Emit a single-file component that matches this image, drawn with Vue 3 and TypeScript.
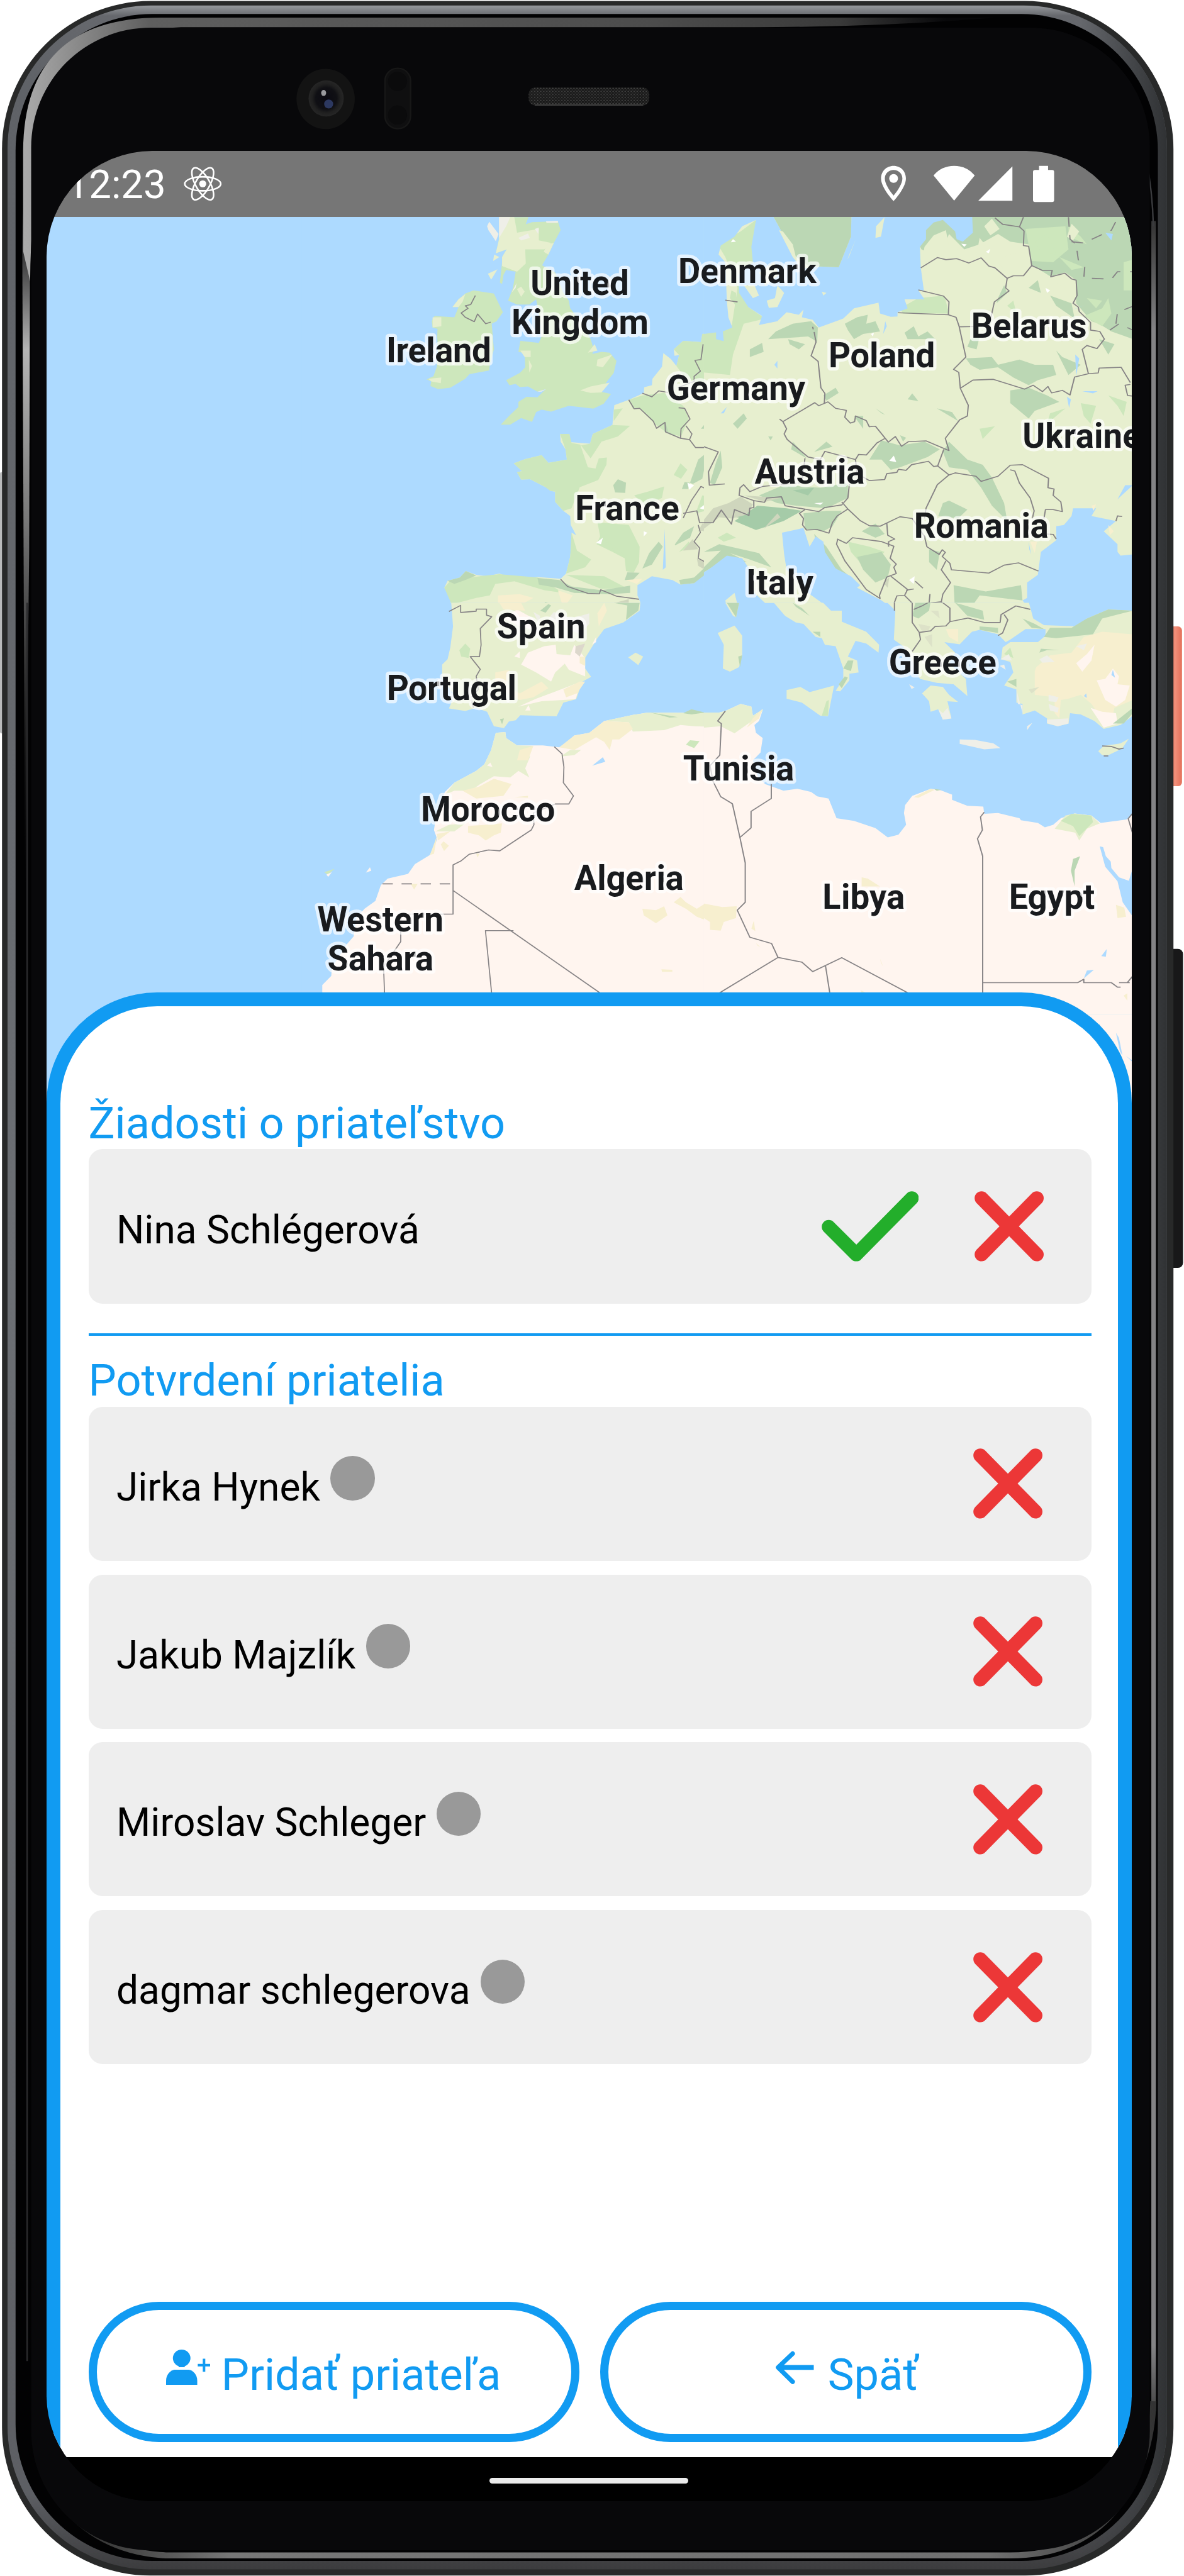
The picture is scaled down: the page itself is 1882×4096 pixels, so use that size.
<script setup lang="ts">
interface Friend {
  name: string
}

interface Shape {
  f: string
  p: string
}

interface Region {
  x: number
  y: number
  w: number
  h: number
  sea: boolean
  shapes: Shape[]
  lines: string[]
  dashed: string[]
}

interface Label {
  t: string
  x: number
  y: number
  w?: number
}

const requests: Friend[] = [{ name: 'Nina Schlégerová' }]
const friends: Friend[] = [
  { name: 'Jirka Hynek' },
  { name: 'Jakub Majzlík' },
  { name: 'Miroslav Schleger' },
  { name: 'dagmar schlegerova' },
]

const SEA = '#addaff'
const PALE = '#e7efcf'
const GREEN = '#cde7bc'
const WOOD = '#bbd7b4'
const ALP = '#a5cba8'
const ROCK = '#cfd6bd'
const SAND = '#f7efcf'
const DESERT = '#fff5ef'
const GREY = '#efefe8'

const s = (f: string, ...ps: string[]): Shape[] => ps.map((p) => ({ f, p }))

const regions: Region[] = [
  {
    // Western Europe
    x: 600, y: 420, w: 850, h: 800, sea: true,
    shapes: [
      ...s(GREEN,
        '724,24 832,24 822,52 845,44 940,40 950,75 925,125 905,170 882,212 930,240 960,320 980,350 985,380 1030,440 1060,500 1072,540 1066,558 1100,550 1130,553 1155,585 1145,632 1120,665 1097,705 1135,714 1108,752 1070,771 980,760 915,783 880,775 860,785 845,823 805,808 765,834 730,834 765,795 795,765 795,745 825,725 865,727 895,695 865,705 830,685 800,687 785,675 762,680 750,660 800,632 820,610 818,555 795,550 802,507 870,515 880,490 870,400 860,345 835,365 790,365 757,350 775,300 785,237 750,230 740,250 735,285 727,280 735,200 735,180 752,150 712,165 724,110',
        '553,375 575,345 600,322 630,310 705,322 738,395 715,430 697,440 705,540 690,600 688,622 615,637 600,655 545,690 500,695 472,683 475,665 458,657 483,645 495,610 500,560 497,490 498,460 480,455 477,430 487,410 560,415 575,375'),
      ...s(PALE,
        '724,24 780,24 790,85 870,70 870,115 915,125 890,150 820,150 822,205 790,237 735,215 735,180 752,150 712,165 724,110',
        '925,125 905,170 888,160 900,130', '706,170 725,180 702,195', '683,245 718,228 695,268',
        '553,375 575,345 600,324 590,355 575,375', '480,415 512,415 512,450 480,455', '465,655 512,650 510,672 475,665',
        '790,305 805,295 818,315 805,335', '802,545 840,545 840,570 818,570', '1050,553 1075,520 1085,545',
        '1085,580 1140,560 1105,610 1082,605', '1022,700 1060,685 1130,670 1100,708 1060,710', '833,580 845,605 835,630'),
      ...s(GREY,
        '680,60 688,42 722,90 712,118 685,75', '724,24 765,24 750,60 724,105', '795,105 830,88 837,105 805,115',
        '770,318 788,282 785,300', '865,705 897,695 880,705', '896,40 940,38 940,46 898,46', '855,70 870,65 868,90'),
      ...s(PALE,
        '1600,24 1600,105 1560,105 1535,135 1527,160 1530,195 1553,215 1553,340 1565,415 1568,440 1553,458 1550,510 1520,502 1518,474 1470,480 1465,512 1400,507 1365,540 1368,565 1385,562 1375,605 1355,578 1327,555 1322,608 1287,655 1285,680 1257,688 1255,710 1200,737 1147,758 1140,835 1068,870 1058,908 985,902 982,870 948,870 950,900 968,930 973,970 905,983 880,953 820,968 778,985 808,1015 790,1020 805,1048 838,1047 893,1077 910,1075 912,1092 930,1095 930,1135 960,1170 985,1190 987,1225 1007,1265 990,1255 990,1300 985,1350 970,1415 950,1435 865,1428 780,1437 725,1415 680,1425 640,1420 602,1405 580,1430 535,1443 523,1470 545,1500 548,1568 1242,1568 1242,1525 1232,1500 1232,1460 1285,1425 1360,1440 1390,1458 1440,1452 1490,1403 1568,1345 1600,1330'),
      ...s(GREEN,
        '1365,540 1400,507 1465,512 1470,480 1518,474 1600,460 1600,630 1520,690 1440,665 1400,640 1375,605 1385,562',
        '1200,737 1250,720 1330,710 1400,760 1420,810 1392,880 1340,865 1300,835 1240,770 1215,772',
        '948,870 982,870 990,905 1022,912 1050,1000 1078,1005 1090,965 1120,962 1118,990 1088,1050 1020,1078 990,1160 960,1170 930,1135 930,1095 912,1092 893,1077 838,1047 805,1048 790,1020 808,1015 778,985 820,968 880,953 905,983 973,970 968,930',
        '1058,908 1068,870 1140,835 1205,838 1160,880 1100,900 1060,965 1025,915',
        '1085,1215 1200,1225 1240,1310 1238,1370 1218,1412 1190,1405 1185,1355 1140,1330 1082,1300 1095,1270',
        '990,1255 1010,1325 1062,1360 1040,1390 970,1415 985,1350', '1390,985 1415,1010 1392,1045 1365,1030',
        '1220,1110 1270,1095 1330,1075 1322,1120 1260,1150', '523,1470 545,1443 630,1428 725,1417 865,1430 960,1490 890,1480 780,1445 710,1455 690,1500 640,1510 550,1535',
        '1110,1280 1150,1310 1185,1345 1150,1330', '1145,775 1178,770 1165,790 1145,820', '1470,1110 1530,1120 1500,1165 1445,1180',
        '970,1420 1110,1425 1190,1470 1100,1475', '1520,1300 1568,1250 1568,1290', '1385,1330 1420,1290 1430,1310'),
      ...s(WOOD,
        '1143,1070 1160,1047 1190,1060 1187,1100 1150,1098', '1425,1060 1455,970 1490,940 1470,1045 1435,1065',
        '1500,1060 1535,960 1557,955 1535,1055', '1250,1395 1275,1335 1310,1290 1325,1310 1285,1380', '1185,1440 1195,1410 1240,1412 1215,1440',
        '865,1432 945,1440 990,1465 1100,1480 1205,1462 1205,1490 1130,1495 1000,1490 935,1470 870,1458',
        '1390,1458 1440,1452 1568,1345 1500,1370 1440,1430 1385,1440', '1370,1300 1400,1255 1440,1230 1425,1275 1370,1305',
        '1335,825 1345,862 1390,885 1330,860', '1490,925 1515,890 1520,925', '535,1443 580,1430 602,1405 640,1422 600,1440 560,1455',
        '1395,1085 1405,1058 1425,1060 1418,1085', '1490,795 1530,800 1508,815', '1465,850 1480,830 1490,850', '870,1550 895,1525 915,1535 885,1568'),
      ...s(ROCK,
        '1455,1250 1470,1220 1530,1218 1545,1165 1600,1150 1600,1215 1500,1245', '1400,1325 1435,1280 1455,1320',
        '1450,1355 1495,1380 1480,1400 1455,1385', '1145,1530 1200,1515 1200,1568 1175,1540'),
      ...s(ALP, '1568,1170 1600,1155 1600,1215 1568,1210', '1475,1250 1498,1245 1485,1270'),
      ...s(SEA, '1325,1400 1332,1240 1336,1390', '1535,795 1560,765 1555,785'),
      ...s(SAND, '1190,1440 1250,1435 1230,1455', '720,1500 800,1495 850,1510 790,1545 720,1530', '940,1480 995,1500 960,1550'),
      ...s('#ffffff', '1255,1250 1268,1255 1255,1270', '1080,1295 1105,1275 1098,1300', '1415,1060 1440,1070 1422,1088', '1460,1160 1480,1145 1475,1165'),
    ],
    lines: [
      '637,330 620,365 600,370 610,380 585,398 600,415 633,432 645,402 675,440 693,434',
      '1473,520 1465,580 1443,583 1463,625 1440,645 1440,665 1380,690', '1250,711 1285,725 1310,702 1345,708',
      '1200,737 1220,772 1240,770 1290,820 1302,848 1333,825 1335,862 1390,887 1423,892 1445,923 1485,923 1530,940 1492,1018 1495,1068 1550,1068 1568,1056',
      '1390,887 1392,850 1425,812 1405,770 1383,768', '1410,838 1432,870 1423,892', '1495,1068 1485,1085 1465,1075 1430,1130 1400,1198',
      '1400,1180 1450,1170 1460,1216 1510,1216 1540,1168 1570,1215', '1455,1225 1463,1255 1440,1290 1460,1315 1455,1355 1498,1380 1490,1403',
      '950,1437 975,1465 1050,1492 1092,1494 1097,1478 1155,1503 1238,1515', '540,1562 583,1540 583,1567 678,1554',
    ],
    dashed: [],
  },
  {
    // Central and Eastern Europe
    x: 1400, y: 420, w: 852, h: 800, sea: false,
    shapes: [
      ...s(PALE, '0,0 1400,0 1400,1568 0,1568'),
      ...s(WOOD,
        '875,0 1400,0 1400,500 1330,470 1290,440 1265,430 1215,360 1215,270 1180,240 1130,255 1070,210 1060,130 1000,120 960,90 900,130 850,150 800,90 770,180 710,150 690,100 740,0',
        '110,1350 60,1320 0,1390 0,1410 75,1355 140,1370', '380,1370 430,1395 510,1460 450,1400 400,1310 360,1260'),
      ...s(GREEN,
        '1050,70 1180,60 1190,150 1140,200 1070,195', '1190,60 1230,100 1250,130 1190,100', '1160,180 1240,220 1200,230',
        '0,470 90,455 110,300 70,180 45,130 120,80 170,35 175,190 145,375 200,420 130,440 95,560 85,640 0,630',
        '640,380 700,340 785,330 800,400 650,400', '1230,750 1280,760 1262,830 1240,800', '1240,410 1300,380 1320,340 1330,400 1300,450',
        '1080,120 1120,90 1150,170 1100,160', '1250,340 1300,350 1280,380', '1320,720 1380,745 1370,800 1350,760', '990,370 1010,350 1020,400',
        '610,920 650,925 640,950', '470,1290 540,1310 590,1330 530,1400 480,1330', '1370,200 1400,190 1400,310 1370,310', '45,1275 75,1255 105,1275 65,1290',
        '1130,790 1180,770 1120,830', '900,850 950,840 910,890', '1290,900 1330,860 1345,910'),
      ...s(PALE,
        '720,140 750,95 790,75 800,140 830,150 870,180 750,180 710,215', '915,60 940,30 965,70 935,95', '900,105 930,150 890,170', '1185,100 1200,50 1225,80 1205,115',
        '960,200 990,170 1060,160 1065,210 1030,250 980,230', '1070,270 1110,250 1180,300 1160,320'),
      // forests of the lowlands
      ...s(WOOD,
        '460,440 500,415 535,405 530,440 560,430 575,470 520,480 490,500 470,465', '655,475 685,450 700,490 730,470 755,500 665,500',
        '150,540 190,515 195,550 150,570', '275,500 330,520 310,540 280,520', '210,500 235,470 290,440 350,430 372,455 370,510 340,490',
        '665,735 680,712 700,742', '560,770 592,795 580,790', '760,770 810,785 830,820', '390,720 430,690 440,710 400,740',
        '855,575 940,570 960,600 1030,580 1080,600 1140,600 1150,640 1090,660 1060,680 1010,650 960,610 900,620 870,600',
        '1000,700 1060,690 1120,720 1160,745 1080,780 1060,810 1000,750', '1150,545 1170,570 1230,600 1190,640', '1130,330 1200,360 1210,420 1150,370',
        '1060,300 1090,270 1100,320', '960,340 980,290 990,320 955,360', '1290,500 1340,520 1320,560', '870,500 900,490 890,540 860,530',
        '490,800 520,800 520,850', '640,875 650,900 660,885', '540,970 580,895 640,915 720,900 770,930 730,960 640,1000 610,1010 580,970',
        '780,940 800,900 860,970 910,990 940,1040 980,1140 990,1210 940,1150 905,1080 860,1010 800,1000', '765,1190 780,1140 800,1130 860,1165 830,1200',
        '180,1110 260,1070 380,1080 470,1060 470,1120 400,1160 300,1150 240,1140', '325,1180 400,1170 450,1170 420,1230 390,1250 330,1240',
        '515,1250 560,1220 590,1260 560,1275', '500,1350 580,1330 610,1380 600,1430 560,1450 520,1400', '735,1320 770,1330 760,1400 735,1370',
        '815,1460 920,1485 1035,1460 1040,1520 900,1500 860,1568 820,1568', '40,980 55,935 60,1000 35,1070 20,1060', '95,830 130,790 140,810 110,850',
        '360,940 400,900 420,920', '210,880 225,880 218,895', '0,1330 50,1300 180,1335 220,1390 150,1360 60,1325', '290,900 320,940 335,965 285,930'),
      ...s(ALP, '175,1150 270,1160 320,1170 260,1210 170,1245 100,1210', '290,1090 360,1080 340,1110', '85,1190 130,1180 130,1200'),
      ...s(ROCK,
        '0,1205 30,1160 80,1140 120,1115 160,1145 140,1185 90,1200 50,1195 0,1240', '130,1110 250,1120 200,1135', '195,1240 240,1180 250,1195', '585,1450 605,1430 600,1470'),
      ...s(SEA,
        '0,0 228,0 228,24 258,90 300,180 340,215 440,220 480,100 482,0 875,0 878,85 845,120 825,110 820,80 780,35 750,45 725,75 725,110 705,140 708,222 718,310 700,310 720,345 655,345 665,380 632,395 632,412 610,413 575,400 570,358 490,380 455,420 375,455 355,425 320,415 325,385 310,405 270,395 240,430 180,445 190,410 145,375 115,320 112,250 160,200 155,140 170,35 125,60 100,100 55,135 48,170 70,200 75,350 80,415 93,455 62,470 65,508 40,500 40,474 0,480',
        '0,1410 20,1395 75,1345 125,1355 150,1400 165,1490 200,1530 225,1568 0,1568',
        '255,1255 325,1237 345,1310 365,1270 390,1290 395,1330 430,1395 480,1425 510,1460 500,1470 580,1520 612,1548 620,1568 450,1568 448,1559 415,1557 385,1529 340,1490 300,1430 270,1400 262,1340',
        '1400,1340 1360,1345 1350,1330 1350,1300 1305,1250 1345,1210 1265,1190 1280,1160 1205,1160 1200,1190 1175,1225 1150,1230 1150,1285 1100,1330 1090,1420 1055,1450 1055,1510 1040,1520 1073,1568 1400,1568',
        '1185,725 1198,735 1192,768', '1212,560 1225,575 1215,645', '1235,703 1285,703 1270,712', '1350,1125 1375,1070 1400,1070', '585,480 592,430 597,450', '230,600 240,585 240,615',
        '1310,85 1335,90 1330,115', '1060,1290 1068,1340 1062,1320', '1205,385 1250,365 1215,380', '55,790 75,765 65,790'),
      // southern Sweden
      ...s(WOOD, '228,0 228,24 258,90 300,180 340,215 440,220 480,100 482,0'),
      ...s(PALE, '245,75 258,80 290,130 300,178 340,213 380,217 320,225 290,180', '560,105 562,60 590,24 578,100', '468,190 495,112 475,175', '385,315 400,320 390,330', '130,290 165,290 180,330 160,340',
        '205,350 232,340 240,290 262,320 240,375 212,378', '180,240 230,200 245,250 200,290', '70,1520 100,1490 115,1560 110,1568 80,1568', '1320,1540 1400,1540 1400,1568 1300,1568'),
      ...s(GREEN, '105,370 85,340 90,310 105,320'),
      ...s(SAND, '1065,1290 1087,1290 1080,1335', '1320,1225 1338,1250 1325,1265', '1265,1150 1280,1145 1272,1170'),
      ...s('#ffffff', '605,975 620,955 628,980', '840,128 858,130 850,140', '1115,300 1130,310 1120,320', '670,1440 688,1425 685,1455', '920,160 935,148 930,165', '545,480 555,475 552,490', '360,1140 390,1138 380,1147', '95,110 105,120 88,122'),
    ],
    lines: [
      '70,348 110,355', '355,452 357,462', '360,472 366,512 350,565 373,587 382,690 395,712 393,752',
      '247,812 258,822 362,748 375,760 405,745 430,770 465,778 460,805 478,828 492,822 495,800 530,818 540,842 560,840 602,902 625,880 645,918 668,900 725,897 800,935 788,887 835,815 860,800 863,758 837,692 832,630 815,618 855,570 833,450 823,415 798,405 633,397',
      '798,405 800,355 782,332 700,308', '708,222 762,182 790,190 825,186 865,203 905,183 930,215 950,222 990,263 1010,253 1043,253 1070,213 1060,138 1043,135 1045,78 1030,62 975,52 950,27', '1030,62 1043,24',
      '990,263 985,300 996,312 948,355 938,410 930,450 833,452', '1070,213 1105,232 1137,232 1132,257 1178,243 1200,265 1215,270 1218,330 1205,360 1222,375 1225,392 1262,435 1262,465 1292,470 1307,500 1283,537 1250,525 1235,540 1255,635 1210,648 1195,718 1170,700 1135,710 1123,685 1105,705 1075,680 1047,695 945,657 878,660 837,692',
      '1255,635 1287,632 1290,613 1362,610 1392,670', '1392,677 1375,680 1383,720 1397,722',
      '258,822 270,850 262,870 272,892 340,960 380,970 395,938 495,970 505,950 530,952 565,905 590,888', '495,970 500,1025 540,1052 590,1048 597,1025 630,1020 635,1008 660,1012 678,990 733,977 750,997 763,995 783,930',
      '763,995 800,1030 762,1068 725,1160 720,1200', '800,1030 820,1022 888,1035 905,1055 960,1035 1000,992 1040,990 1125,1043 1123,1080 1143,1085 1140,1110 1165,1135 1170,1173 1140,1165 1115,1165 1110,1200',
      '1000,1010 1015,1015 1030,1062 1065,1120 1078,1170 1072,1200', '0,920 47,940 15,1018 18,1070 68,1065', '0,1216 30,1216 57,1167 90,1222 100,1165 147,1188 150,1160 163,1157 163,1130 198,1137 205,1120 253,1115 265,1150 375,1173 395,1157 450,1147 470,1120 475,1065',
      '163,1130 115,1110 118,1080 130,1068 150,1095 190,1075 320,1060 330,965', '330,1165 312,1180 325,1200 322,1225 335,1245 370,1243 408,1257 420,1215 435,1190 470,1163 450,1135', '470,1163 510,1208 540,1228 575,1230 640,1193 680,1200 720,1270 728,1310 768,1340 778,1322 788,1332 778,1348 803,1375 808,1400 930,1413 980,1382 1027,1373 1092,1405',
      '597,1218 600,1265 623,1280 603,1290 603,1310', '435,1280 465,1297 485,1275 580,1290 620,1308 608,1355 628,1378 620,1390 628,1415 597,1428 573,1500 575,1512 530,1477 460,1365 433,1300 437,1280',
      '610,1425 665,1477 655,1500 630,1502 618,1540 622,1560', '655,1500 680,1530 685,1568', '690,1445 715,1472', '660,1480 685,1475', '738,1495 735,1530 690,1545', '735,1530 775,1525 803,1568', '790,1365 775,1400 805,1450 780,1495 775,1525', '1065,1553 1018,1545 985,1565', '1110,1260 1140,1262 1150,1280', '1345,1210 1350,1190 1365,1192',
    ],
    dashed: ['1190,24 1195,110 1215,130 1222,190 1243,220 1240,262 1330,266 1350,237 1400,237', '1200,120 1240,125 1330,75 1345,40', '1325,465 1355,440 1400,465', '1345,440 1350,395 1400,372'],
  },
  {
    // Iberia and the Maghreb
    x: 600, y: 1200, w: 850, h: 820, sea: true,
    shapes: [
      ...s(PALE,
        '548,-5 555,90 545,170 535,215 515,235 515,290 560,350 540,402 600,412 640,400 680,415 705,470 742,477 760,452 785,447 802,428 935,432 960,380 1007,367 1030,300 1062,282 1040,250 1040,210 1085,135 1110,100 1180,75 1240,30 1243,-5',
        '1198,208 1225,190 1253,205 1235,237', '1527,115 1568,87 1568,262 1547,250 1545,160', '1552,0 1568,0 1568,25'),
      ...s(DESERT, '75,1568 75,1455 108,1420 110,1390 165,1300 190,1270 200,1200 230,1165 270,1135 290,1075 315,1050 390,1032 415,995 470,960 497,900 485,865 490,830 525,720 560,685 640,640 670,615 695,560 712,495 747,492 750,515 790,543 885,543 945,550 975,530 1000,505 1055,495 1110,450 1215,427 1270,418 1600,420 1600,1568',
        '805,235 830,190 890,165 932,160 935,195 985,200 1000,160 1040,210 1040,280 980,255 965,232 930,265 915,300 860,265', '795,395 860,365 925,340 1000,310 1020,315 1005,367 960,370 880,375', '740,60 790,25 850,60 870,110 800,90', '820,410 832,390 840,410', '780,205 800,185 800,210', '1065,160 1080,130 1080,150'),
      ...s(PALE,
        '712,495 747,492 750,515 790,543 850,545 800,570 838,585 820,630 835,665 795,640 765,665 705,660 655,690 620,715 560,715 525,730 560,685 640,640 670,615 695,560',
        '1110,450 1215,427 1270,418 1600,420 1600,475 1440,470 1390,465 1330,485 1215,490 1200,455', '490,870 540,845 600,840 560,870', '950,585 985,560 1025,560 1000,580'),
      ...s(SAND,
        '650,700 705,670 770,690 740,735 640,745 590,715', '1055,495 1110,450 1200,455 1215,480 1165,520 1140,520 1130,560 1110,530 1080,512 1000,560 945,550 1000,505', '800,560 850,545 830,600 790,600',
        '610,850 735,840 730,875 705,885 675,905 650,885 610,875', '510,920 520,908 540,925 522,945', '470,960 497,885 485,955', '400,1070 425,1070 412,1092', '1250,1165 1300,1170 1330,1155 1342,1190 1300,1220 1255,1190',
        '1365,1140 1390,1120 1410,1140 1450,1165 1480,1145 1568,1155 1568,1215 1535,1248 1500,1245 1500,1215 1450,1195 1410,1165', '1320,1395 1360,1397 1360,1405 1322,1405', '710,265 760,255 755,320 800,345 880,300 905,325 850,360 800,370 760,350 710,300',
        '725,0 805,0 820,30 740,25', '960,330 1020,300 1040,300 1010,345 970,360', '1020,205 1040,205 1040,240 1020,230', '640,955 652,955 645,970', '780,740 830,735 830,742', '495,880 545,870 500,905', '1085,40 1110,0 1120,30 1090,90'),
      ...s(GREEN, '578,180 600,155 618,175 612,210 585,205', '1410,540 1425,523 1460,527 1440,553', '82,1025 120,1013 95,1035'),
      ...s(WOOD, '1280,418 1340,428 1380,435 1350,437', '1400,420 1430,405 1480,418 1430,425', '1145,0 1240,0 1235,30 1190,65 1195,10', '727,443 742,440 735,462', '875,30 905,5 915,10 895,38'),
      ...s(GREY, '905,60 925,35 990,60 1055,40 1055,80 1020,120 960,90', '850,35 875,50 870,80'),
      ...s('#ddd8cc', '1005,165 1040,155 1020,205 1003,190'),
      ...s(SEA, '1066,620 1105,588 1114,605'),
      ...s(DESERT, '235,1027 250,1007 255,1020', '90,1035 110,1025 97,1043', '680,620 692,608 700,625'),
    ],
    lines: [
      '540,33 583,10 583,37 640,32 640,24 678,24 678,47 697,53 655,98 658,160 652,205 618,205 655,253 640,280 648,330 620,360 630,400',
      '927,548 955,575 962,625 960,685 997,735 980,766 930,766 850,800 852,845 842,865 727,944 685,941 615,957 585,982 555,998 555,1185 395,1185 363,1190 363,1290 300,1385 304,1500',
      '555,1095 1115,1500', '698,1500 674,1248 777,1248', '1515,1500 1568,1465', '1555,412 1527,450 1540,460 1535,580 1500,620 1510,680 1535,735 1568,760',
    ],
    dashed: ['296,1070 555,1070'],
  },
  {
    // Eastern Mediterranean
    x: 1400, y: 1200, w: 852, h: 820, sea: true,
    shapes: [
      ...s(PALE,
        '225,-5 265,50 300,75 325,80 365,130 385,135 395,160 430,165 455,250 455,290 430,335 445,337 475,295 475,270 505,265 500,220 470,205 495,145 530,155 570,190 572,160 530,110 450,72 450,30 415,30 385,-5',
        '270,332 315,320 345,340 425,315 405,432 380,430 320,380 270,365', '70,0 115,0 105,55 95,50', '45,115 100,87 125,125 125,200 115,245 85,262 62,250 65,160',
        '595,-5 625,30 620,140 650,165 680,220 705,290 760,305 815,310 860,355 855,290 800,230 820,190 785,150 835,158 875,110 900,103 960,120 985,150 1000,140 1050,100 1115,100 1115,125 1090,150 1000,150 975,170 970,215 1000,225 1010,265 980,315 1020,330 1020,380 1040,385 1040,425 1080,410 1120,440 1120,460 1155,470 1190,460 1195,420 1230,425 1275,450 1305,480 1360,465 1400,430 1400,30 1320,25 1250,60 1220,90 1110,85 1075,60 1060,-5',
        '712,345 740,315 780,320 800,350 830,378 795,375 808,440 780,445 765,405 740,415 735,375', '1287,565 1305,545 1360,535 1387,517 1365,555 1320,580 1300,580'),
      ...s(DESERT, '0,420 50,418 70,412 120,385 155,395 160,430 193,405 180,450 165,465 170,495 192,515 185,570 160,600 175,660 200,690 260,715 305,708 350,720 370,737 407,745 433,820 490,830 560,858 600,893 635,883 660,845 653,800 657,770 680,735 740,708 770,712 810,730 810,750 860,773 912,776 915,803 960,800 1030,820 1035,828 1090,838 1113,855 1140,845 1165,820 1210,802 1265,810 1295,838 1380,825 1400,800 1400,1568 0,1568'),
      ...s(PALE, '0,418 50,418 70,412 120,385 155,395 160,430 193,405 180,435 145,460 100,497 55,470 0,475', '1145,860 1180,810 1210,802 1265,810 1292,840 1250,860 1225,905 1212,875'),
      ...s(SAND, '1085,245 1130,200 1200,190 1240,130 1300,110 1400,120 1400,370 1340,400 1335,430 1280,410 1265,385 1230,350 1190,365 1165,370 1160,440 1145,420 1145,360 1080,350 1080,260', '190,405 180,440 140,475 160,440',
        '685,740 740,708 753,712 700,742', '0,1145 60,1158 107,1155 105,1200 65,1215 55,1248 20,1245 20,1215 0,1200', '515,1045 535,1050 575,1080 515,1080', '1345,1150 1372,1160 1378,1195 1350,1200', '155,1240 163,1210 168,1250', '170,1295 185,1312 175,1305', '575,1355 585,1385 578,1370', '1370,1495 1382,1487 1382,1515', '790,100 830,100 830,150 800,130', '512,1475 530,1485 515,1487'),
      ...s(DESERT,
        '1215,230 1250,195 1275,160 1265,220 1235,262', '1282,295 1310,290 1335,250 1355,280 1350,310 1390,315 1375,370 1345,395 1310,370', '1262,400 1300,415 1345,420 1350,460 1305,475'),
      ...s(GREEN, '1165,830 1200,803 1265,810 1270,835 1225,888 1205,850', '400,375 408,370 405,430 385,430', '980,195 1000,170 1010,210'),
      ...s(WOOD, '1205,975 1228,965 1210,1020 1210,1080 1198,1020', '1250,60 1320,25 1400,30 1300,60 1270,120 1150,135 1110,130 1130,95 1200,95', '900,90 960,95 960,115 900,103', '1095,190 1100,175 1160,180 1120,180', '990,300 1020,290 1020,320',
        '820,0 910,30 915,65 860,50', '690,0 740,-5 735,30 700,60 680,50', '455,250 470,220 488,220 480,260', '440,310 460,280 470,285 450,325', '355,110 380,110 380,130', '290,0 320,20 345,50 300,15', '75,0 115,0 105,55', '1335,460 1400,400 1400,420 1370,460', '112,205 125,200 118,245', '750,708 775,712 760,715', '1040,60 1080,80 1110,100 1070,95'),
      ...s('#dde2c8', '700,80 740,90 730,110 710,105', '1060,330 1095,320 1070,345', '720,130 745,120 745,170', '740,30 765,30 770,60'),
      ...s(GREY, '835,520 885,522 945,535 968,553 915,558 835,537', '1055,485 1055,470 1072,457', '1095,215 1120,200 1145,225 1105,228', '1125,350 1158,360 1150,378 1125,375', '1125,385 1158,400 1155,418 1130,410', '1120,445 1190,440 1190,460 1155,470 1120,458', '975,315 1020,330 1025,385 1040,390 1040,420 1020,330', '968,215 995,195 1005,220', '965,240 980,235 985,255', '670,310 688,322 678,328', '765,405 780,420 795,400 808,440 780,445', '1215,165 1250,155 1240,180'),
      ...s(SEA, '1292,927 1303,930 1312,965 1328,985 1330,1010 1355,1045 1387,1058 1400,1010 1400,1195 1367,1140 1350,1060 1310,1005', '1297,1345 1315,1318 1312,1347', '1240,1430 1250,1400 1273,1397', '1330,275 1335,255 1342,285', '1240,355 1248,345 1250,362'),
    ],
    lines: [
      '70,412 45,450 57,460 52,580 20,620 30,680 55,738 93,765 118,895 135,990 135,1140 109,1170 150,1273 221,1297 242,1350 320,1368 355,1404 450,1351 690,1500', '242,1350 30,1500', '397,1382 413,1500',
      '220,690 220,745 154,794 154,857 118,893', '915,797 903,815 909,865 893,898 910,965 910,1500', '910,1446 1220,1446 1240,1433 1240,1446 1330,1446 1350,1463 1360,1463', '1355,1446 1390,1446', '1382,1446 1400,1420', '1400,800 1385,822 1400,880',
      '622,0 622,30', '680,0 680,75 703,113 707,140 680,185', '685,25 715,10 738,-5', '703,113 740,107 755,90 790,88 803,72 862,58 915,75 967,75 970,45 1018,12 1065,25', '803,72 803,20 780,0', '980,45 992,65 975,115 960,125', '1300,545 1330,547 1355,557 1370,553', '1305,583 1320,583',
    ],
    dashed: [],
  },
]

const labels: Label[] = [
  { t: 'United', x: 1058, y: 587, w: 190 },
  { t: 'Kingdom', x: 1020, y: 665, w: 267 },
  { t: 'Ireland', x: 771, y: 721, w: 203 },
  { t: 'Denmark', x: 1352, y: 564, w: 269 },
  { t: 'Germany', x: 1329, y: 796.5, w: 270 },
  { t: 'Poland', x: 1651, y: 731, w: 206 },
  { t: 'Belarus', x: 1935, y: 672.5, w: 224 },
  { t: 'Ukraine', x: 2037, y: 891, w: 230 },
  { t: 'Austria', x: 1504, y: 963, w: 213 },
  { t: 'Romania', x: 1821, y: 1071, w: 262 },
  { t: 'Italy', x: 1487, y: 1183, w: 128 },
  { t: 'France', x: 1147, y: 1035, w: 201 },
  { t: 'Spain', x: 991, y: 1271, w: 170 },
  { t: 'Portugal', x: 772, y: 1393.5, w: 252 },
  { t: 'Morocco', x: 840, y: 1634.6, w: 261 },
  { t: 'Algeria', x: 1145, y: 1771.6, w: 212 },
  { t: 'Western', x: 634, y: 1854, w: 245 },
  { t: 'Sahara', x: 654, y: 1932, w: 205 },
  { t: 'Tunisia', x: 1361.5, y: 1553.5, w: 215 },
  { t: 'Greece', x: 1771, y: 1342, w: 208 },
  { t: 'Libya', x: 1639, y: 1809, w: 158 },
  { t: 'Egypt', x: 2010, y: 1809, w: 165 },
]
</script>

<template>
  <main class="stage">
    <svg class="frame" viewBox="0 0 2356 5128" preserveAspectRatio="none" aria-hidden="true">
      <defs>
        <linearGradient id="metal" x1="0" y1="0" x2="0" y2="1">
          <stop offset="0" stop-color="#96999d" /><stop offset=".004" stop-color="#66686d" /><stop offset=".03" stop-color="#5f6267" />
          <stop offset=".5" stop-color="#6c6f74" /><stop offset=".97" stop-color="#5d5f64" /><stop offset="1" stop-color="#3c3c3e" />
        </linearGradient>
        <linearGradient id="shade" gradientUnits="userSpaceOnUse" x1="2150" y1="0" x2="2322" y2="0">
          <stop offset="0" stop-color="#303234" stop-opacity="0" /><stop offset=".8" stop-color="#303234" stop-opacity=".8" /><stop offset="1" stop-color="#303234" />
        </linearGradient>
        <linearGradient id="glassTop" x1="0" y1="0" x2="1" y2="0">
          <stop offset="0" stop-color="#aaa" /><stop offset=".13" stop-color="#5f5f5f" /><stop offset=".65" stop-color="#4c4c4c" /><stop offset=".84" stop-color="#3a3a3a" /><stop offset=".95" stop-color="#08080a" />
        </linearGradient>
        <linearGradient id="glassLeft" x1="0" y1="0" x2="0" y2="1">
          <stop offset="0" stop-color="#aaa" stop-opacity="0" /><stop offset=".2" stop-color="#b5b5b5" /><stop offset=".45" stop-color="#777" /><stop offset="1" stop-color="#111" stop-opacity="0" />
        </linearGradient>
        <linearGradient id="rim" x1="0" y1="0" x2="0" y2="1">
          <stop offset="0" stop-color="#333" /><stop offset=".05" stop-color="#838385" /><stop offset=".97" stop-color="#838385" /><stop offset="1" stop-color="#444" />
        </linearGradient>
        <linearGradient id="power" x1="0" y1="0" x2="1" y2="0">
          <stop offset="0" stop-color="#d96a54" /><stop offset=".5" stop-color="#f18f79" /><stop offset="1" stop-color="#e4705a" />
        </linearGradient>
        <linearGradient id="bottomEdge" x1="0" y1="0" x2="1" y2="0">
          <stop offset="0" stop-color="#222" /><stop offset=".16" stop-color="#777" /><stop offset=".85" stop-color="#707070" /><stop offset="1" stop-color="#333" />
        </linearGradient>
        <radialGradient id="lens">
          <stop offset="0" stop-color="#0b0a12" /><stop offset=".6" stop-color="#101014" /><stop offset=".8" stop-color="#202020" /><stop offset="1" stop-color="#262626" />
        </radialGradient>
        <pattern id="mesh" width="6" height="6" patternUnits="userSpaceOnUse"><rect width="6" height="6" fill="#161616" /><circle cx="2" cy="2" r="1.4" fill="#4a4a4a" /><circle cx="5" cy="5" r="1.2" fill="#3d3d3d" /></pattern>
      </defs>
      <rect x="2325" y="1247" width="27" height="318" rx="8" fill="url(#power)" />
      <rect x="2325" y="1889" width="29" height="635" rx="10" fill="#181819" />
      <rect x="0" y="940" width="6" height="520" rx="3" fill="#b9babb" />
      <rect x="4" y="2" width="2331" height="5125" rx="295" fill="#282929" />
      <rect x="15" y="11" width="2307" height="5104" rx="285" fill="url(#metal)" />
      <rect x="15" y="11" width="2307" height="5104" rx="285" fill="url(#shade)" />
      <rect x="31" y="28" width="2273" height="5070" rx="272" fill="#020203" />
      <path d="M46 500 V300 Q48 35 320 35 H1980 Q1750 54 1500 54 H360 Q62 60 60 560 Z" fill="url(#glassTop)" />
      <path d="M44 420 L60 420 L58 1100 L50 1800 Z" fill="url(#glassLeft)" />
      <path d="M54 1200 V4700" stroke="#2b2b2d" stroke-width="3" />
      <rect x="2291" y="440" width="9" height="4360" fill="url(#rim)" />
      <path d="M2295 4780 Q2292 4900 2225 4990 Q2150 5087 2010 5087 H330 Q190 5080 110 4970" fill="none" stroke="url(#bottomEdge)" stroke-width="12" />
      <path d="M2295 450 Q2290 240 2190 120" fill="none" stroke="#3a3b3e" stroke-width="3" />
      <rect x="62" y="55" width="2226" height="5022" rx="238" fill="#08080a" />
      <ellipse cx="648" cy="197" rx="58" ry="60" fill="#131313" />
      <ellipse cx="649" cy="196" rx="35" ry="36" fill="url(#lens)" />
      <ellipse cx="654" cy="207" rx="9" ry="9" fill="#2c3860" />
      <ellipse cx="644" cy="185" rx="5" ry="6" fill="#9a9a9e" />
      <rect x="766" y="136" width="51" height="120" rx="25" fill="#0f0f10" stroke="#171717" stroke-width="3" />
      <circle cx="791" cy="162" r="19" fill="#0b0b0c" /><circle cx="791" cy="229" r="19" fill="#0b0b0c" />
      <rect x="1052" y="174" width="240" height="36" rx="14" fill="url(#mesh)" />
      <path d="M1064 209 H1280" stroke="#4b4b4b" stroke-width="2" />
    </svg>

    <section class="screen">
      <svg class="map" viewBox="92 432 2160 1800" preserveAspectRatio="none" aria-hidden="true">
        <rect x="92" y="432" width="2160" height="1800" :fill="SEA" />
        <rect x="1700" y="2000" width="552" height="232" :fill="DESERT" />
        <svg v-for="(r, i) in regions" :key="i" :x="r.x" :y="r.y" :width="r.w" :height="r.h" :viewBox="r.x === 1400 ? '0 0 1397.4 1568' : '0 0 1568 1568'" preserveAspectRatio="none">
          <rect v-if="r.sea" width="1568" height="1568" :fill="SEA" />
          <polygon v-for="(g, j) in r.shapes" :key="j" :points="g.p" :fill="g.f" />
          <polyline v-for="(l, j) in r.lines" :key="'l' + j" class="border" :points="l" />
          <polyline v-for="(l, j) in r.dashed" :key="'d' + j" class="border dashed" :points="l" />
        </svg>
        <path d="M2220 2056 l6 10 l7 35 l-5 -8 Z M2240 2102 l12 9 v2 Z" :fill="SEA" />
        <text v-for="l in labels" :key="l.t" class="label" :x="l.x - 3" :y="l.y" :textLength="l.w ? l.w + 6 : undefined">{{ l.t }}</text>
      </svg>

      <header class="status">
        <span class="clock">12:23</span>
        <svg class="react" viewBox="0 0 76 71" fill="none" stroke="#fff" stroke-width="3.2">
          <g transform="translate(38 35.5)"><ellipse rx="36" ry="14" /><ellipse rx="36" ry="14" transform="rotate(60)" /><ellipse rx="36" ry="14" transform="rotate(120)" /><circle r="7" fill="#fff" stroke="none" /></g>
        </svg>
        <svg class="tray" viewBox="1753 329 346 74" fill="#fff">
          <path fill-rule="evenodd" d="M1778.500 330 C1764 330 1753.500 341 1753.500 355 C1753.500 374 1778.500 400 1778.500 400 C1778.500 400 1803 374 1803 355 C1803 341 1793 330 1778.500 330 Z M1778.500 338 C1788 338 1796 345 1796 355 C1796 365 1787 379 1778.500 389 C1770 379 1761 365 1761 355 C1761 345 1769 338 1778.500 338 Z" />
          <circle cx="1778.500" cy="355" r="8.800" />
          <path d="M1858 349 Q1874 330 1899 330 Q1924 330 1940 349 L1899 399 Z" />
          <path d="M2015 331 V399.500 H1947 Z" />
          <path d="M2068 330 H2086 V338 H2094 Q2098 338 2098 342 V398 Q2098 402 2094 402 H2060 Q2056 402 2056 398 V342 Q2056 338 2060 338 H2068 Z" />
        </svg>
      </header>

      <section class="sheet">
        <h2>Žiadosti o priateľstvo</h2>
        <ul class="list">
          <li v-for="p in requests" :key="p.name" class="card">
            <span class="name">{{ p.name }}</span>
            <svg class="check" viewBox="0 0 193 140"><path d="M14 71 L69 126 L179.500 14" /></svg>
            <svg class="cross" viewBox="0 0 138 140"><path d="M14 14 L124 126 M124 14 L14 126" /></svg>
          </li>
        </ul>
        <hr class="rule" />
        <h2>Potvrdení priatelia</h2>
        <ul class="list">
          <li v-for="p in friends" :key="p.name" class="card confirmed">
            <span class="name">{{ p.name }} <i class="dot"></i></span>
            <svg class="cross" viewBox="0 0 138 140"><path d="M14 14 L124 126 M124 14 L14 126" /></svg>
          </li>
        </ul>

        <footer class="actions">
          <button type="button" class="btn">
            <svg class="ico" viewBox="0 0 88 88" fill="#119bf2">
              <ellipse cx="31" cy="17" rx="17.500" ry="17" /><path d="M25 29 H37 V35 H25 Z" />
              <path d="M0 70 V62 C0 49 9 41 17 40 H45 C53 41 62 49 62 62 V70 Z" />
              <path d="M75.500 18 V44 M63 31 H88" stroke="#119bf2" stroke-width="5" />
            </svg>
            <span>Pridať priateľa</span>
          </button>
          <button type="button" class="btn">
            <svg class="ico" viewBox="0 0 88 88" fill="none" stroke="#119bf2" stroke-width="9.500">
              <path d="M82 35.500 H14" /><path d="M40 8 L11 35.500 L40 64" stroke-linejoin="round" stroke-linecap="round" stroke-width="9" />
            </svg>
            <span>Späť</span>
          </button>
        </footer>
      </section>

      <nav class="home"><span class="pill"></span></nav>
    </section>
  </main>
</template>

<style>
body {
  margin: 0;
  background: #fff;
}
</style>

<style scoped>
.stage {
  position: relative;
  box-sizing: border-box;
  width: 1882px;
  height: 4096px;
  padding: 239.6px 0 0 73.5px;
  overflow: hidden;
  background: #fff;
  font-family: Roboto, 'Liberation Sans', sans-serif;
}
.frame {
  position: absolute;
  inset: 0;
  width: 100%;
  height: 100%;
}
.screen {
  position: relative;
  display: flex;
  flex-direction: column;
  width: 1725.4px;
  height: 3737.6px;
  overflow: hidden;
  border-radius: 168px;
  background: #000;
}
.map {
  position: absolute;
  left: 0;
  top: 105.4px;
  width: 1725.4px;
  height: 1437.8px;
}
.border {
  fill: none;
  stroke: #878486;
  stroke-width: 4;
  stroke-linejoin: round;
}
.dashed {
  stroke-dasharray: 38 32;
}
.label {
  font: 700 68.5px Roboto, sans-serif;
  fill: #191b1e;
  stroke: rgba(255, 255, 255, 0.68);
  stroke-width: 13px;
  stroke-linejoin: round;
  paint-order: stroke;
}
.status {
  position: relative;
  display: flex;
  align-items: center;
  flex: none;
  height: 105.4px;
  margin-bottom: 1233.3px;
  padding: 0 123px 0 32px;
  background: #767676;
  color: #fff;
}
.clock {
  width: 186px;
  font-size: 63.5px;
  line-height: 105px;
  padding-top: 3px;
}
.react {
  width: 60.5px;
  height: 56.5px;
}
.tray {
  width: 276.4px;
  height: 59.1px;
  margin-left: auto;
}
.sheet {
  position: relative;
  display: flex;
  flex-direction: column;
  flex: none;
  box-sizing: border-box;
  height: 2329.200px;
  padding: 144.8px 41.900px 24px 45px;
  border: 22px solid #119bf2;
  border-bottom: 0;
  border-radius: 176px 176px 0 0;
  background: #fff;
}
h2 {
  margin: 0;
  height: 82.4px;
  font-size: 70.3px;
  line-height: 82.4px;
  font-weight: 400;
  color: #119bf2;
}
.list {
  display: flex;
  flex-direction: column;
  gap: 21.700px;
  margin: 0;
  padding: 0;
  list-style: none;
}
.card {
  display: flex;
  align-items: center;
  box-sizing: border-box;
  height: 245.1px;
  padding: 0 76px 0 44.500px;
  border-radius: 22px;
  background: #eee;
}
.confirmed {
  padding-right: 78px;
}
.name {
  flex: 1;
  padding-top: 11px;
  font-size: 62.200px;
  line-height: 234px;
  color: #000;
  white-space: nowrap;
}
.dot {
  display: inline-block;
  width: 70.300px;
  height: 70.300px;
  margin-left: 1px;
  border-radius: 50%;
  background: #999;
}
.check,
.cross {
  flex: none;
  fill: none;
  stroke-width: 27.500;
  stroke-linecap: round;
  stroke-linejoin: round;
}
.check {
  width: 154.200px;
  height: 111.800px;
  margin-right: 88.700px;
  stroke: #23ae2b;
}
.cross {
  width: 110.200px;
  height: 111.800px;
  stroke: #ec3737;
}
.rule {
  width: 100%;
  height: 4.600px;
  margin: 47.200px 0 30px;
  border: 0;
  background: #119bf2;
}
.actions {
  display: flex;
  gap: 33px;
  margin-top: auto;
}
.btn {
  display: flex;
  flex: 1 1 0;
  align-items: center;
  justify-content: center;
  gap: 18px;
  box-sizing: border-box;
  height: 223.700px;
  padding: 0 2px 0 0;
  border: 13.500px solid #119bf2;
  border-radius: 112px;
  background: #fff;
  color: #119bf2;
  font: 400 70.300px/84px Roboto, 'Liberation Sans', sans-serif;
}
.btn span {
  padding-top: 9px;
}
.ico {
  width: 70.300px;
  height: 70.300px;
}
.home {
  display: flex;
  flex: 1;
  align-items: center;
  justify-content: center;
  background: #000;
}
.pill {
  width: 315.500px;
  height: 9.600px;
  margin-top: 4px;
  border-radius: 5px;
  background: #ebebeb;
}
</style>
